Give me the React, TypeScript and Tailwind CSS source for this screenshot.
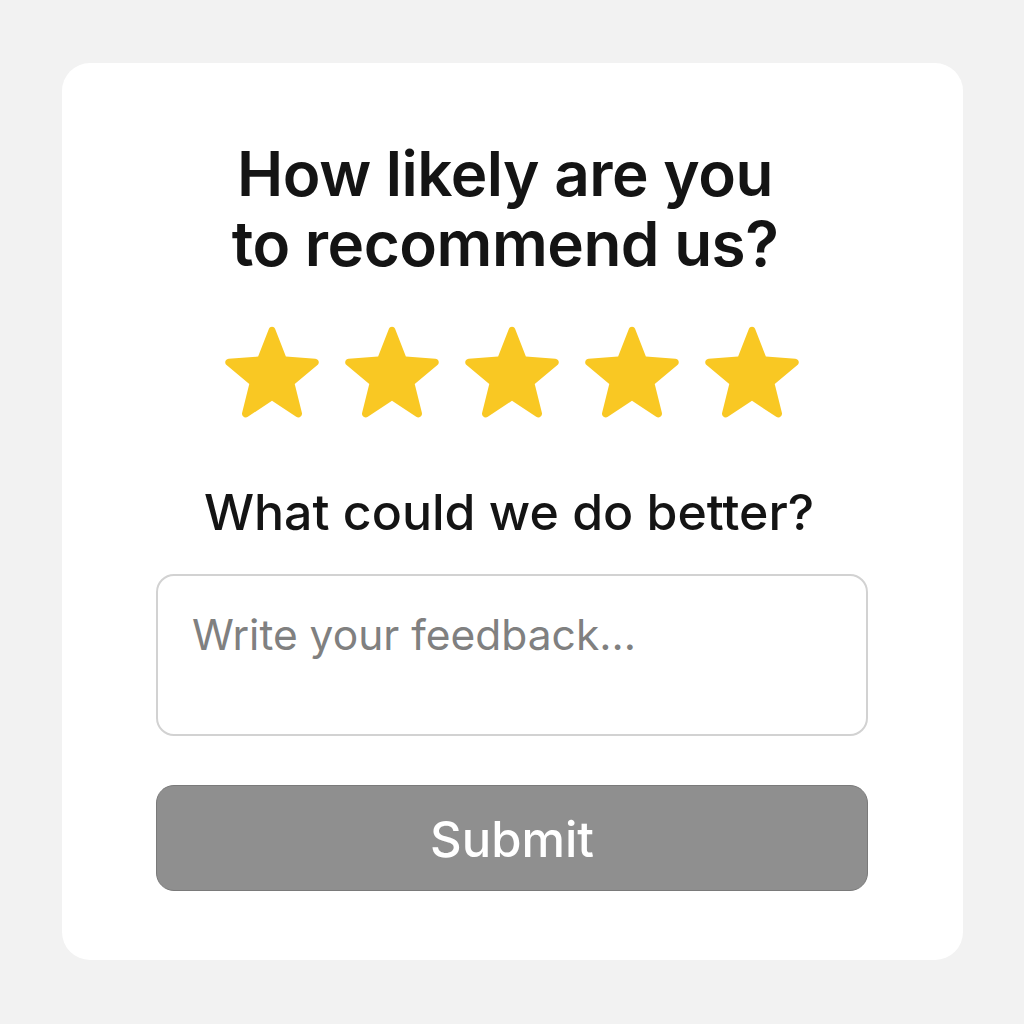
import React from 'react';

function Star() {
  return (
    <svg viewBox="0 0 24 24" className="w-[104px] h-[101px]" aria-hidden="true">
      <path
        d="M12 1.6c.35 0 .6.2.75.55l2.55 6.55 7 .5c.8.06 1.1 1 .5 1.5l-5.4 4.5 1.7 6.85c.2.8-.65 1.4-1.35.95L12 19.2l-5.75 3.8c-.7.45-1.55-.15-1.35-.95l1.7-6.85-5.4-4.5c-.6-.5-.3-1.44.5-1.5l7-.5 2.55-6.55c.15-.35.4-.55.75-.55z"
        fill="#f9c823"
      />
    </svg>
  );
}

export default function App() {
  return (
    <div className="min-h-screen w-full bg-[#f2f2f2] flex items-start justify-center pt-[63px] font-['Inter',sans-serif]">
      <div className="w-[901px] h-[897px] bg-white rounded-[28px] flex flex-col items-center pt-[76px]">
        <h1 className="text-[62px] leading-[70px] font-semibold text-[#141414] text-center tracking-[-0.5px] pr-[14px]">
          How likely are you
          <br />
          to recommend us?
        </h1>

        <div className="flex items-center gap-[16px] mt-[41px]">
          <Star />
          <Star />
          <Star />
          <Star />
          <Star />
        </div>

        <h2 className="mt-[63px] text-[50px] leading-[56px] font-medium text-[#141414] pr-[6px]">
          What could we do better?
        </h2>

        <div className="mt-[34px] w-[712px] h-[162px] border-2 border-[#d2d2d2] rounded-[18px] px-[34px] pt-[34px]">
          <span className="text-[42.5px] leading-[50px] text-[#808080]">Write your feedback...</span>
        </div>

        <button className="mt-[49px] w-[712px] h-[106px] bg-[#8f8f8f] border border-[#7a7a7a] rounded-[18px] text-white text-[49px] font-medium pt-[4px]">
          Submit
        </button>
      </div>
    </div>
  );
}
